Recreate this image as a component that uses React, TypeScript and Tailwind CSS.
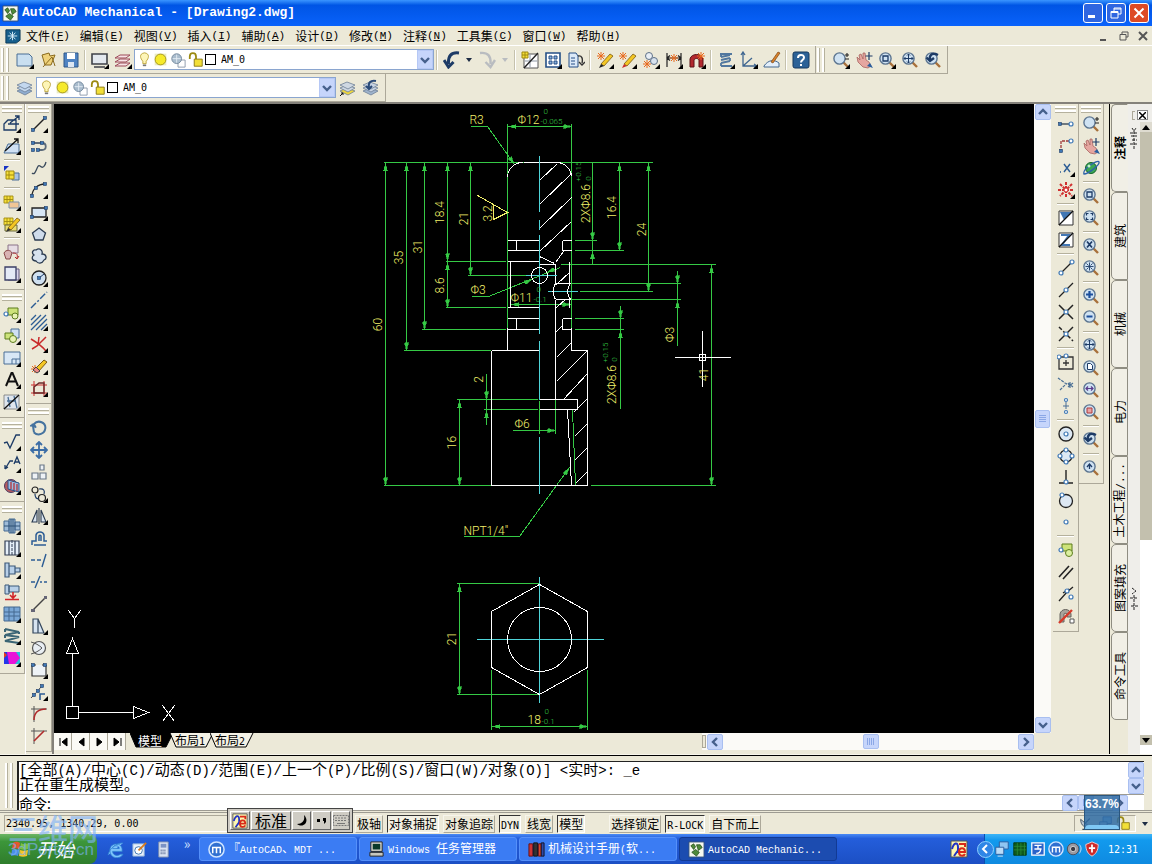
import React from 'react';

const NAVY = '#1d3b66';
const BLUE = '#3f78b5';
const GREEN = '#35c945';
const CYAN = '#4fd4d8';
const YELLOW = '#f2f06a';

/* ---------- small pieces shared by the icons ---------- */

const ring = (x: number, y: number, r = 2) => (
  <circle key={`r${x}-${y}`} cx={x} cy={y} r={r} fill="#fff" stroke={BLUE} strokeWidth="1.2" />
);
const node = (x: number, y: number) => (
  <rect key={`n${x}-${y}`} x={x - 1.5} y={y - 1.5} width="3" height="3" fill={BLUE} stroke={NAVY} strokeWidth=".6" />
);
const lens = (inner?: React.ReactNode) => (
  <>
    <path d="M11.5 11.5l4.5 4.5" stroke="#a8703a" strokeWidth="2.4" />
    <circle cx="7.5" cy="7.5" r="5.6" fill="#cfe2f2" stroke="#5c7590" strokeWidth="1.4" />
    {inner}
  </>
);
const star = (x: number, y: number) => (
  <path
    d={`M${x} ${y - 4}v8M${x - 4} ${y}h8M${x - 3} ${y - 3}l6 6M${x + 3} ${y - 3}l-6 6`}
    stroke="#e8691c"
    strokeWidth="1"
  />
);
const pencil = (tip: string) => (
  <>
    <path d="M5 13L14 3l3 2-9 10z" fill="#f3c623" stroke="#7a5a12" strokeWidth=".8" />
    <path d="M5 13l3 2-5 2z" fill={tip} stroke="none" />
  </>
);
const sheets = (a: string, b: string) => (
  <>
    <path d="M1 12l7-3 8 3-7 4z" fill={b} stroke="#6d7f95" strokeWidth=".8" />
    <path d="M1 9l7-3 8 3-7 4z" fill={a} stroke="#6d7f95" strokeWidth=".8" />
    <path d="M1 6l7-3 8 3-7 4z" fill={a} stroke="#6d7f95" strokeWidth=".8" />
  </>
);
const yellowGrid = (
  <path d="M1 3h9v7H1zM4 3v7M7 3v7M1 6.500h9" fill="#f6e03a" stroke="#a08a10" strokeWidth=".9" />
);

const ICONS: Record<string, React.ReactNode> = {
  // standard toolbar
  New: <path d="M1 3h12l3 3v9H1z" fill="#c9dff0" stroke="#4a6f95" />,
  Open: (
    <>
      <path d="M3 4l7-2 1 3 5-1-4 10H6z" fill="#efd27a" stroke="#8a6a1d" />
      <path d="M4 16l9-10 3 9" stroke="#8a6a1d" />
    </>
  ),
  Save: (
    <>
      <path d="M2 2h14v14H2z" fill="#4f83c2" stroke="#2f5688" />
      <path d="M5 2h8v6H5z" fill="#fff" stroke="none" />
      <path d="M6 11h6v5H6z" fill="#dce6f2" stroke="none" />
    </>
  ),
  Screen: <path d="M1 3h15v10H1zM3 16h11" fill="#e3e8ee" stroke="#3f4248" strokeWidth="1.6" />,
  'Layer sheets': (
    <path d="M1 7l5-3h10l-4 3zM1 11l5-3h10l-4 3zM1 15l5-3h10l-4 3z" fill="#f7e3e6" stroke="#9c4a58" />
  ),
  Undo: <path d="M16 2C8 1 5 5 5.500 13M1 9l4.500 7 5-5" stroke={NAVY} strokeWidth="3" />,
  Redo: <path d="M2 2c8-1 11 3 10.500 11M17 9l-4.500 7-5-5" stroke="#b9bcc0" strokeWidth="2.4" />,
  'Power dimension': (
    <>
      <path d="M3 3h14v14H3z" fill="#fff" stroke="#555" />
      <path d="M9 4v12M4 10h12" stroke="#8d97a3" />
      <path d="M3 17L17 2" stroke="#222" strokeWidth="1.4" />
      <path d="M1 1h6v6H1zM4 1v6M1 4h6" fill="#f6e03a" stroke="#a08a10" />
    </>
  ),
  'Hole chart': (
    <>
      <path d="M2 2h14v14H2z" fill="#fff" stroke="#244f86" strokeWidth="1.6" />
      <path d="M5 5h3v3H5zM10 5h3v3h-3zM5 10h3v3H5zM10 10h3v3h-3z" fill="#8ab0dc" stroke="#244f86" />
    </>
  ),
  'Copy sheet': (
    <>
      <path d="M2 2h7l2 3v11H2z" fill="#dbe9f8" stroke="#244f86" />
      <path d="M4 7h4M4 10h4M4 13h4" stroke="#244f86" />
      <path d="M11 5c4-1 5 3 4 7M12 11l3 3 3-3" stroke="#333" strokeWidth="1.4" />
    </>
  ),
  'Edit new': <>{pencil('#222')}{star(5, 5)}</>,
  'Edit pick': <>{pencil('#c9302c')}{star(4, 5)}</>,
  'Gear links': (
    <>
      <circle cx="7" cy="5" r="3.500" fill="#e8eef5" stroke="#5f7187" />
      <circle cx="12" cy="10" r="3.500" fill="#d7e2ee" stroke="#5f7187" />
      {star(5, 13)}
    </>
  ),
  'Auto dimension': (
    <>
      <path d="M2 2v14M16 2v14M2 7h14M5 4.500L2 7l3 2.500M13 4.500L16 7l-3 2.500" stroke="#222" strokeWidth="1.2" />
      {star(9, 7)}
    </>
  ),
  'Content library': (
    <>
      <path d="M2 8c1-6 12-6 13 0v8h-4V9c-1-2-4-2-5 0v7H2z" fill="#b2282e" stroke="#5a1216" />
      {star(13, 5)}
    </>
  ),
  Spring: <path d="M3 3h12M4 6l9-2M4 9l9-2M4 12l9-2M4 15h11M4 3v3M13 7v3M4 12v3" stroke="#52789f" strokeWidth="1.8" />,
  Axes: <path d="M3 2v13h13M3 15L12 7M1 4l2-3 2 3M14 13l3 2-3 2" stroke="#3f6690" strokeWidth="1.3" />,
  Sketch: (
    <>
      <path d="M1 15c4-6 10-7 15-3v4H1z" fill="#e2eefa" stroke="#44688f" />
      <path d="M8 11l7-10 2 1-7 10z" fill="#d9822b" stroke="#7d4512" strokeWidth=".7" />
    </>
  ),
  Help: (
    <>
      <rect x="1" y="1" width="16" height="16" rx="2" fill="#2c6297" stroke="#15385f" />
      <path d="M6 7c0-4 6-4 6-.5C12 9 9 9 9 11.500M9 13v2" stroke="#fff" strokeWidth="2" />
    </>
  ),
  // zoom tools
  'Zoom realtime': lens(<path d="M13 4h4M15 2v4M13 8h4" stroke="#222" strokeWidth="1.1" />),
  Pan: (
    <>
      <path d="M2 6l3 3-1-5 2-1 2 5 0-6 2 0 1 7 3 2 2 4-3 2-5-1-5-5z" fill="#e5a6a0" stroke="#a8645f" strokeWidth=".8" />
      <path d="M12 15l3-3 3 5z" fill="#2b5f9e" stroke="none" />
      <path d="M14 1v8M10.500 5h7" stroke={NAVY} strokeWidth="1.2" />
    </>
  ),
  Orbit: (
    <>
      <circle cx="9" cy="9" r="5.500" fill="#3aa655" stroke="#14652d" />
      <path d="M2 15C0 10 16 0 17 3s-11 12-15 12z" stroke="#2d62a8" strokeWidth="1.3" />
      <circle cx="7" cy="7" r="1.500" fill="#c4f0cf" stroke="none" />
    </>
  ),
  'Zoom window': lens(<path d="M5 5h5v5H5z" stroke={NAVY} strokeWidth="1.300" />),
  'Zoom frame': lens(<path d="M4.500 6.500v-2h2M8.500 4.500h2v2M10.500 8.500v2h-2M6.500 10.500h-2v-2" stroke={NAVY} strokeWidth="1.200" />),
  'Zoom scale': lens(<path d="M5 4.500l5 6M10 4.500l-5 6" stroke={NAVY} strokeWidth="1.700" />),
  'Zoom centre': lens(<path d="M4.500 4.500l2 2M10.500 4.500l-2 2M4.500 10.500l2-2M10.500 10.500l-2-2M7.500 3.500v8M3.500 7.500h8" stroke={NAVY} strokeWidth=".9" />),
  'Zoom in': lens(<path d="M7.500 4v7M4 7.500h7" stroke="#1c4f9c" strokeWidth="2.200" />),
  'Zoom out': lens(<path d="M4.500 7.500h6" stroke="#1c4f9c" strokeWidth="2" />),
  'Zoom all': lens(<path d="M7.500 3v9M3 7.500h9M6 4.500l1.500-1.500L9 4.500M6 10.500L7.500 12 9 10.500M4.500 6L3 7.500 4.500 9M10.500 6L12 7.500 10.500 9" stroke={NAVY} strokeWidth="1" />),
  'Zoom extents': lens(<path d="M5.500 4.500h3l2 2v4h-5z" fill="#fff" stroke={NAVY} />),
  'Zoom object': lens(<path d="M4 7.500h7M6 5.500l-2 2 2 2M9 5.500l2 2-2 2" stroke="#5b3b8c" strokeWidth="1.200" />),
  'Zoom part': lens(<path d="M5 5h5v5H5z" fill="#e8a3a3" stroke="#b03a3a" />),
  'Zoom previous': lens(<path d="M14 4C8 1 5 4 6 9M2.500 6.500L6 10l4-3" stroke={NAVY} strokeWidth="2.400" />),
  'Zoom restore': lens(<path d="M5 8l2.500-3L10 8M7.500 5v5" stroke={NAVY} strokeWidth="1.300" />),
  // layer tools
  Layers: sheets('#c3d8ef', '#8fadd0'),
  'Layer current': <>{sheets('#cfd8e2', '#f0d83a')}<path d="M1 17l3-3M2 14h2v2" stroke="#111" /></>,
  'Layer previous': <>{sheets('#c7d3e2', '#9fb4cd')}<path d="M14 2C8 1 6 4 7 9M4 7l3 3 3-3" stroke="#2a4a78" strokeWidth="2" /></>,
  // layout column
  'Rectangle by base': <path d="M1 9l4-4h8v10H1zM5 9h11M7 8l9-7M12 1h4v4" stroke={NAVY} strokeWidth="1.300" />,
  'Rectangle by height': (
    <>
      <path d="M1 16l4-9h11v9z" fill="#cfe0f3" stroke="#4a6f95" />
      <path d="M2 14L15 2M11 2h4v4" stroke="#111" strokeWidth="1.300" />
    </>
  ),
  'Block grid': (
    <>
      <path d="M1 1h5l-5 5z" fill="#1733c4" stroke="none" />
      <path d="M9 8h7v7H9z" fill="#a9c3e4" stroke="#4a6f95" />
      <path d="M3 6h8v8H3zM6 6v8M3 10h8" fill="#f6e03a" stroke="#a08a10" />
    </>
  ),
  'Block copy': <>{yellowGrid}<path d="M6 9h10v6H6z" fill="#f1c696" stroke="#7d91a8" /></>,
  'Block edit': <>{yellowGrid}<path d="M2 10h12v6H2z" fill="#e9dd70" stroke="#6b6b40" />{pencil('#333')}</>,
  'Part shapes': (
    <>
      <path d="M5 2h10v8H5z" fill="#e6dde4" stroke="#8a7288" />
      <path d="M1 10c2-4 7-3 8 0l-2 6H3z" fill="#d9b3b3" stroke="#894848" />
      <path d="M10 10c4 0 5 2 4 5M12 14l2 2 2-3" stroke="#b2282e" />
    </>
  ),
  'Copy frame': (
    <>
      <path d="M5 4h11v11H5z" fill="#d8d4ea" stroke="#60597d" />
      <path d="M2 2h11v13H2z" fill="#e4eaf6" stroke="#3b3f66" strokeWidth="1.300" />
    </>
  ),
  'Part reference': (
    <>
      <path d="M5 3h10v7H5z" fill="#cde37a" stroke="#5c7d1d" />
      <circle cx="12" cy="11" r="3" fill="#e8f3b5" stroke="#5c7d1d" />
      {ring(3, 9)}
    </>
  ),
  'Part group': (
    <>
      <path d="M8 2h8v9H8z" fill="#cfe0f3" stroke="#4a6f95" />
      <path d="M2 6h8v6H2z" fill="#cde37a" stroke="#5c7d1d" />
      <circle cx="10" cy="12" r="3.500" fill="#e8f3b5" stroke="#5c7d1d" />
    </>
  ),
  'Title block': <path d="M1 3h16v12H1zM9 15v-5h8M13 10v5" fill="#d8e7f5" stroke="#4a6f95" />,
  Text: <path d="M3 15L8.500 2h1L15 15M5 10.500h8" stroke="#111" strokeWidth="2" />,
  'Section line': (
    <>
      <path d="M1 2h15v14H1z" fill="#dfe6ee" stroke="#777" strokeWidth=".8" />
      <path d="M5 4l2 10M11 3l3 12M4 8h9" stroke="#4a6f95" strokeWidth="1.300" />
      <path d="M1 16L16 2" stroke="#111" strokeWidth="1.300" />
    </>
  ),
  'Surface texture': <path d="M1 10l3-1 3 6L13 2h4" stroke={NAVY} strokeWidth="1.400" />,
  Leader: <path d="M2 14L7 6h3M2 14l0-4M2 14l3-2M11 9l3-7 3 7M12 7h4" stroke={NAVY} strokeWidth="1.300" />,
  'Bill of material': (
    <>
      <circle cx="8" cy="9" r="6.500" fill="#b65a5f" stroke="#4a3b60" />
      <path d="M5 3l11 3v9L5 12z" fill="#9dbbe0" stroke="#2c4f85" />
      <path d="M8 5v7M11 6v7M14 7v7" stroke="#b2282e" strokeWidth="1.200" />
    </>
  ),
  Screw: (
    <>
      <path d="M1 4h5v10H1zM6 2h6v14H6zM12 5h5v8h-5z" fill="#9fbcd9" stroke="#456990" />
      <path d="M1 9h16M8 2v14M10 2v14" stroke="#2f5377" />
    </>
  ),
  'Shaft section': (
    <>
      <path d="M2 2h14v14H2zM6 2v14M12 2v14" fill="#e6f0fa" stroke="#333f55" strokeWidth="1.200" />
      <path d="M9 1v16" stroke="#333f55" strokeDasharray="3 1" />
    </>
  ),
  'Shaft generator': <path d="M2 2h4v14H2zM6 5h6v8H6zM12 7h5v4h-5z" fill="#b8d0e8" stroke="#3b5878" strokeWidth="1.200" />,
  'Bearing load': (
    <>
      <path d="M2 2h4v9H2zM6 3h10v6H6z" fill="#b8d0e8" stroke="#3b5878" />
      <path d="M10 9v5M7 12l3 3 3-3M2 16.500h14" stroke="#d0262b" strokeWidth="1.600" />
    </>
  ),
  'Fem table': <path d="M1 2h16v14H1zM1 7h16M1 11h16M6 2v14M11 2v14" fill="#7aa7d6" stroke="#456990" />,
  'Spring coil': <path d="M2 2l14 3-14 3 14 2-14 4 14 2M2 2v3M16 5v2M2 8v3" stroke="#3b6575" strokeWidth="2" />,
  'Colour map': (
    <>
      <path d="M1 3h16v12H1z" fill="#25c4d8" stroke="none" />
      <path d="M1 3h6v12H1z" fill="#2436e8" stroke="none" />
      <path d="M4 3h9l4 6-5 6H6z" fill="#e815d8" stroke="none" />
      <path d="M1 3l3 3-3 3z" fill="#e83a1c" stroke="none" />
    </>
  ),
  // draw column
  Line: <><path d="M3 15L15 3" stroke="#222" strokeWidth="1.400" />{node(3, 15)}{node(15, 3)}</>,
  Polyline: <><path d="M3 6h9c5 0 5 7 0 7H8" stroke="#5d6b7a" strokeWidth="1.800" />{node(3, 6)}{node(12, 6)}{node(3, 13)}{node(8, 13)}</>,
  Spline: <path d="M2 14c4 4 5-10 8-7s5 0 6-4" stroke="#3a4a5c" strokeWidth="1.300" />,
  Arc: <><path d="M2 15C2 8 8 3 15 3" stroke="#222" strokeWidth="1.300" />{node(2, 15)}{node(6, 7)}{node(15, 3)}</>,
  Rectangle: <><path d="M2 5h14v9H2z" fill="#d7e6f4" stroke="#222" strokeWidth="1.300" />{node(2, 14)}{node(16, 5)}</>,
  Polygon: <path d="M9 3l6.500 5-2.500 7H5L2.500 8z" fill="#cfdceb" stroke="#2b3b50" strokeWidth="1.300" />,
  'Revision cloud': <path d="M6 3c4-3 7 1 6 4 5 0 5 5 2 6-2 4-6 4-8 1-4 0-5-4-2-6-3-2-1-6 2-5z" fill="#d7e3ef" stroke="#2b3b50" strokeWidth="1.300" />,
  Circle: <><circle cx="9" cy="9" r="7" fill="#cfe0f0" stroke="#222" strokeWidth="1.300" /><path d="M9 9l5-4" stroke={NAVY} />{node(9, 9)}</>,
  'Construction line': <path d="M1 17L17 1" stroke="#2c5c94" strokeWidth="1.400" strokeDasharray="7 2 2 2" />,
  Hatch: <path d="M1 7l5-5M1 12L11 2M1 17L16 2M6 17L17 6M11 17l6-6" stroke="#2c5c94" strokeWidth="1.300" />,
  'Centre cross': <path d="M1 4c5 3 11 7 15 12M2 14l5-3 9-9M8 10L9 2" stroke="#c92a2a" strokeWidth="1.500" />,
  'Erase part': <>{star(5, 12)}<path d="M5 12L14 3l3 2-9 10z" fill="#f3c623" stroke="#7a5a12" /><path d="M3 13l3-3 4 4-3 2z" fill="#e88" stroke="#444" /></>,
  Contour: <><path d="M4 2v15M14 2v15M1 6h16M1 14h16" stroke="#c92a2a" /><path d="M4 8l5-4h5v10H4z" stroke="#6b2a2a" strokeWidth="1.400" /></>,
  // modify column
  Rotate: <path d="M5 4c6-4 12 2 10 7s-9 6-12 1M3 12l1-9M1 5l4-1 1 4" stroke="#45739f" strokeWidth="2" transform="rotate(-15 9 9)" />,
  Move: <path d="M9 1v16M1 9h16M6 4l3-3 3 3M6 14l3 3 3-3M4 6L1 9l3 3M14 6l3 3-3 3" stroke="#3b6da6" strokeWidth="1.800" />,
  Array: <path d="M2 10h6v6H2zM10 10h6v6h-6zM10 2h4v5h-4z" fill="#eef2f6" stroke="#6b7887" strokeWidth="1.200" />,
  'Copy rotate': <><circle cx="5" cy="5" r="3" stroke="#222" strokeWidth="1.200" /><circle cx="12" cy="13" r="3.500" stroke="#222" strokeWidth="1.200" /><path d="M9 4c5-1 6 2 5 5M5 9c0 4 2 5 4 5" stroke={NAVY} strokeWidth="1.200" /></>,
  Mirror: <path d="M7 3v12H2zM11 3v12h5zM9 1v16" fill="#d9e4ef" stroke="#2b3b50" strokeWidth="1.100" />,
  Offset: <path d="M2 16v-4h4V6c1-4 7-4 8 0v6h3M4 16h12M9 12V7c0-1 2-1 2 0v5" stroke="#2c5c94" strokeWidth="1.500" />,
  Trim: <path d="M1 9h4M7 9h4M12 16L16 3" stroke="#2c5c94" strokeWidth="1.400" />,
  Extend: <path d="M1 9h4M5 15L10 3M10 9h2M14 9h3" stroke="#2c5c94" strokeWidth="1.400" />,
  Lengthen: <><path d="M2 16L16 2" stroke="#444" strokeWidth="1.400" /><path d="M1 14h4v3H1zM14 1h3v3h-3z" fill="#667" stroke="none" /></>,
  Stretch: <path d="M3 2h5v14H3zM8 2l6 14H8" fill="#d6e3f0" stroke="#33465c" strokeWidth="1.200" />,
  'Join circle': <><circle cx="9" cy="9" r="6.500" fill="#e9eef3" stroke="#555" strokeWidth="1.200" /><path d="M1 3c4 1 8 3 11 6-3 3-7 5-11 6" stroke="#555" /></>,
  Break: <><path d="M2 4h4M12 4h4M2 4v11h14V4" fill="#eef2f6" stroke="#333" strokeWidth="1.200" />{node(3, 4)}{node(15, 4)}</>,
  'Corner copy': <><path d="M1 15L12 3" stroke="#444" strokeDasharray="3 1" />{node(4, 12)}{node(8, 8)}{node(12, 3)}<path d="M10 17v-6h5" stroke="#2c5c94" strokeWidth="1.600" /></>,
  Fillet: <><path d="M1 4h16M4 1v16" stroke="#555" /><path d="M4 15c0-7 4-11 12-11" stroke="#b02b2b" strokeWidth="1.600" /></>,
  Chamfer: <><path d="M1 4h16M4 1v16" stroke="#555" /><path d="M4 14L14 4" stroke="#b02b2b" strokeWidth="1.600" /></>,
  // object snap column
  'Temporary track': <><path d="M3 9h10" stroke="#2b3b50" strokeWidth="1.300" />{node(3, 9)}{ring(14, 9)}</>,
  'Snap from': <><path d="M4 15V4h9" stroke="#a03a3a" strokeDasharray="3 1" strokeWidth="1.300" />{node(4, 14)}{ring(14, 4)}</>,
  'Point filter': <path d="M7 5l6 8M13 5l-6 8M3 13h1" stroke="#2c5c94" strokeWidth="1.400" />,
  'Snap burst': <><path d="M9 1v16M1 9h16M3 3l12 12M15 3L3 15" stroke="#d03030" strokeWidth="2" strokeDasharray="3 1" /><circle cx="9" cy="9" r="2" fill="#fff" stroke="#d03030" /></>,
  'Snap filter': <><path d="M2 2h14v14H2z" fill="#fff" stroke="#333" /><path d="M3 3h12l-8 8z" fill="#4277b4" stroke="none" /><path d="M2 16L16 2" stroke="#111" strokeWidth="1.300" /></>,
  'Snap order': <><path d="M2 2h14v14H2z" fill="#fff" stroke="#333" /><path d="M4 4h8L5 14h8" stroke="#4277b4" strokeWidth="2" /><path d="M2 16L16 2" stroke="#111" strokeWidth="1.300" /></>,
  'Snap endpoint': <><path d="M4 14L14 4" stroke="#222" strokeWidth="1.300" />{ring(4, 14)}{ring(15, 3)}</>,
  'Snap midpoint': <><path d="M2 16L16 2" stroke="#222" strokeWidth="1.300" />{ring(9, 9)}</>,
  'Snap intersection': <><path d="M2 2l14 14M16 2L2 16" stroke="#222" strokeWidth="1.500" />{ring(9, 9)}</>,
  'Snap apparent': <><path d="M2 2l14 14" stroke="#222" strokeWidth="1.500" strokeDasharray="4 2" /><path d="M16 2L2 16" stroke="#222" strokeWidth="1.500" />{ring(9, 9)}</>,
  'Snap extension': <><path d="M2 4h14v12H2zM9 7v6M6 10h6" stroke="#333" strokeWidth="1.300" />{ring(2, 4)}{ring(9, 3)}</>,
  'Snap virtual': <path d="M1 3l7 5 7 3M3 15l6-6M13 7v6M11 8l5 4M16 8l-5 4" stroke="#4a6f95" strokeWidth="1.200" strokeDasharray="3 1" />,
  'Snap symmetric': <><path d="M9 5v7M6 9h6" stroke="#4a6f95" />{ring(9, 3, 1.5)}{ring(9, 15, 1.5)}</>,
  'Snap centre': <><circle cx="9" cy="9" r="7" fill="#dde8f3" stroke="#222" strokeWidth="1.400" />{ring(9, 9)}</>,
  'Snap quadrant': <><circle cx="9" cy="9" r="6" fill="#dde8f3" stroke="#222" strokeWidth="1.200" />{ring(9, 3)}{ring(9, 15)}{ring(3, 9)}{ring(15, 9)}</>,
  'Snap perpendicular': <><path d="M9 1v12M2 14h14" stroke="#222" strokeWidth="1.400" />{ring(9, 13)}</>,
  'Snap tangent': <><circle cx="9" cy="10" r="6.500" fill="#dde8f3" stroke="#222" strokeWidth="1.300" />{ring(5, 4)}</>,
  'Snap node': ring(9, 9),
  'Snap insert': <><path d="M5 3h10v7H5z" fill="#cde37a" stroke="#5c7d1d" /><circle cx="12" cy="12" r="3.500" fill="#dcefa0" stroke="#5c7d1d" />{ring(4, 9)}</>,
  'Snap parallel': <path d="M2 14L12 3M6 16L16 5" stroke="#222" strokeWidth="1.600" />,
  'Snap nearest': <><path d="M2 16L10 7l6-5M6 8l6-4" stroke="#222" strokeWidth="1.300" />{ring(10, 6)}{ring(14, 12)}</>,
  'Snap none': <><path d="M3 15V7c1-6 10-6 11 0v3h-4V7c-1-1-3-1-3 0v8z" fill="#a9a49c" stroke="#66625c" /><path d="M2 16L15 3" stroke="#d83a2a" strokeWidth="2.400" /><path d="M13 12h4v4h-4z" fill="#fff" stroke="#555" /></>,
  // windows
  Drawing: <><path d="M1 1h16v16H1z" fill="#f7f9ef" stroke="#2d4c7a" /><path d="M3 5l3-2 2 3-2 3zM9 4h4l2 3-4 3zM4 12l4-3 4 3-3 4z" fill="#4f8a3a" stroke="#234d1b" strokeWidth=".8" /></>,
  Document: <><path d="M2 3h15v11l-4 3H2z" fill="#175f8c" stroke="#0d3a57" /><path d="M9 5v9M4 9.500h10M6 6l6 7M12 6l-6 7" stroke="#d7edf8" /></>,
  'Internet browser': <path d="M16 11H6c0 5 7 5 8 3h3c-3 6-14 5-14-4S16 1 16 9z M6 8h7c0-4-7-4-7 0zM1 15C3 7 10 2 17 2" fill="#7fc4fb" stroke="#2b7fd1" strokeWidth=".8" />,
  Desktop: <><path d="M2 3h12v13H2z" fill="#e9f1fa" stroke="#8fb0d8" /><circle cx="8" cy="10" r="4" fill="#fff" stroke="#3a72b0" /><path d="M8 10l8-8" stroke="#d97a1a" strokeWidth="2" /></>,
  Calculator: <><path d="M4 1h10v16H4z" fill="#dbe4f2" stroke="#7d8eb0" /><path d="M6 3h6v4H6z" fill="#7b93c4" stroke="none" /><path d="M6 10h6M6 13h6" stroke="#5a6c94" strokeDasharray="1 1" strokeWidth="2" /></>,
  'M badge': <><circle cx="9" cy="9" r="8" fill="#2f6fd0" stroke="#cfe4ff" strokeWidth="1.600" /><path d="M5 13V7h8v6M9 7v6" stroke="#fff" strokeWidth="1.600" /></>,
  Computer: <><path d="M3 1h12v10H3z" fill="#d8d8d0" stroke="#222" /><path d="M5 3h8v6H5z" fill="#0b3a2a" stroke="none" /><path d="M2 12h14v4H2z" fill="#c7c7bf" stroke="#222" /></>,
  Books: <><path d="M1 3h4v13H1z" fill="#c33" stroke="#611" /><path d="M6 2h4v14H6z" fill="#333" stroke="#111" /><path d="M11 3h3v13h-3z" fill="#d9482a" stroke="#611" /><path d="M14 2h3v14h-3z" fill="#2f4aa8" stroke="#112" /></>,
  Language: <><path d="M1 1h16v16H1z" fill="#fdf6b0" stroke="#555" /><path d="M2 9c2-7 6-7 6-2v6M4 16l5-7" stroke="#2233c4" strokeWidth="2" /><path d="M9 12h6c0-5-6-5-6 0s5 4 6 2M9 4h6v3" stroke="#d92a1a" strokeWidth="2" /></>,
  Network: <><path d="M6 1h10v8H6z" fill="#8fc6f2" stroke="#2a5a9c" /><path d="M2 7h9v8H2z" fill="#b9dcf7" stroke="#2a5a9c" /><path d="M4 17h6" stroke="#dfe9f5" /></>,
  Monitor: <><path d="M2 2h14v14H2z" fill="#0f5a1c" stroke="#053a0d" /><path d="M2 6h14M2 10h14M6 2v14M10 2v14M14 2v14" stroke="#2d8f3b" strokeWidth=".8" /></>,
  Input: <><path d="M2 2h14v14H2z" fill="#2a62c9" stroke="#fff" strokeWidth="1.400" /><path d="M5 5h8M9 5v4M5 9h8M12 9c0 4-3 5-5 5" stroke="#fff" strokeWidth="1.500" /></>,
  Sound: <><circle cx="8" cy="9" r="6.500" fill="#9a9aa2" stroke="#4b4b55" /><circle cx="8" cy="9" r="3" fill="#3a3a44" stroke="#ddd" /><path d="M15 4c3 3 2 7 0 10" stroke="#dfe9f5" /></>,
  Satellite: <><path d="M2 4c0 8 5 10 11 9z" fill="#b9c4d0" stroke="#3c4856" /><path d="M7 9l6-6M4 16h8M8 12v4" stroke="#3c4856" strokeWidth="1.400" /></>,
  Shield: <><path d="M9 1l7 3c0 7-3 11-7 13C5 15 2 11 2 4z" fill="#cf2b2b" stroke="#f4d4d4" /><path d="M9 4v9M5.500 8h7" stroke="#fff" strokeWidth="2" /></>,
  Bulb: <><path d="M9 1c-7 1-5 7-2 10v3h4v-3c3-3 5-9-2-10z" fill="#fdf5b8" stroke="#b59a2a" /><path d="M7 16h4" stroke="#777" strokeWidth="2" /></>,
  Sun: <><path d="M2 2h14v14H2z" fill="#e9eac0" stroke="none" /><circle cx="9" cy="9" r="6.500" fill="#f6ea2c" stroke="#9a8a12" /></>,
  Freeze: <><path d="M9 9h8v8H9z" fill="#fff" stroke="#8794a6" /><circle cx="7.500" cy="7.500" r="5.500" fill="#a9bccd" stroke="#71869c" /><path d="M7.500 3v9M3 7.500h9" stroke="#e5edf5" /></>,
  Unlock: <><path d="M2 8V5c0-5 7-5 7 0v3" stroke="#9c8a12" strokeWidth="2" /><path d="M7 8h9v8H7z" fill="#f2df38" stroke="#857410" /></>,
};

const Icon = ({ name, size = 18, fly }: { name: string; size?: number; fly?: boolean }) => (
  <svg width={size} height={size} viewBox="0 0 18 18" fill="none" stroke={NAVY} className="shrink-0" aria-hidden="true">
    {ICONS[name]}
    {fly && <path d="M18 13v5h-5z" fill="#000" stroke="none" />}
  </svg>
);

/* ---------- text: han glyphs at the element's size, latin in a narrower mono ---------- */

const Mixed = ({ text, latin = "font-['DejaVu_Sans_Mono'] text-[10px]" }: { text: string; latin?: string }) => (
  <>
    {text.split(/([\x20-\x7e]+)/).map((part, i) =>
      i % 2 ? <span key={i} className={latin}>{part}</span> : part,
    )}
  </>
);

/* ---------- toolbars; "|" is a separator, a trailing * marks a fly-out button ---------- */

const ToolButton = ({ id, vertical }: { id: string; vertical?: boolean }) => {
  const name = id.replace('*', '');
  return (
    <button
      type="button"
      aria-label={name}
      className={`flex shrink-0 items-center justify-center ${vertical ? 'h-[22px] w-full' : 'h-6 w-[23px]'}`}
    >
      <Icon name={name} fly={id.endsWith('*')} />
    </button>
  );
};

const HTools = ({ items }: { items: string[] }) => (
  <>
    {items.map((id, i) =>
      id === '|' ? (
        <div key={i} className="mx-[2px] h-5 w-[2px] shrink-0 border-l border-[#c5c1ad] bg-white" />
      ) : (
        <ToolButton key={i} id={id} />
      ),
    )}
  </>
);

const HGrip = () => (
  <div className="mr-[3px] flex h-6 w-[10px] shrink-0 justify-center gap-[2px]">
    <div className="w-[3px] border-r border-[#b5b19d] bg-white" />
    <div className="w-[3px] border-r border-[#b5b19d] bg-white" />
  </div>
);

const VGroup = ({ items, first }: { items: string[]; first?: boolean }) => (
  <div className="border-r border-b border-[#aca899] pb-1">
    <div className={`flex flex-col gap-[1px] px-[2px] ${first ? 'h-[9px] pt-[2px]' : 'h-[13px] pt-1'}`}>
      <div className="h-[3px] border-b border-[#b5b19d] bg-white" />
      <div className="h-[3px] border-b border-[#b5b19d] bg-white" />
    </div>
    {items.map((id, i) =>
      id === '|' ? (
        <div key={i} className="mx-1 my-[2px] h-[2px] border-t border-[#b5b19d] bg-white" />
      ) : (
        <ToolButton key={i} id={id} vertical />
      ),
    )}
  </div>
);

const Chevron = ({ dir }: { dir: 'up' | 'down' | 'left' | 'right' }) => {
  const d = {
    up: 'M3 9l4-4 4 4',
    down: 'M3 5l4 4 4-4',
    left: 'M9 3L5 7l4 4',
    right: 'M5 3l4 4-4 4',
  }[dir];
  return (
    <svg width="14" height="14" viewBox="0 0 14 14" fill="none" stroke="#45608c" strokeWidth="2.4" aria-hidden="true">
      <path d={d} />
    </svg>
  );
};

const ScrollButton = ({ dir }: { dir: 'up' | 'down' | 'left' | 'right' }) => (
  <button
    type="button"
    aria-label={`Scroll ${dir}`}
    className="flex size-4 shrink-0 items-center justify-center rounded-[2px] border border-[#a9bff0] bg-[#c6d5fb]"
  >
    <Chevron dir={dir} />
  </button>
);

const LayerSelect = ({ label }: { label: string }) => (
  <label className="flex h-[21px] w-[300px] shrink-0 items-center border border-[#8aa5cf] bg-white pl-[2px]">
    <Icon name="Bulb" size={15} />
    <span className="w-[1px]" />
    <Icon name="Sun" size={15} />
    <span className="w-[2px]" />
    <Icon name="Freeze" size={16} />
    <span className="w-[2px]" />
    <Icon name="Unlock" size={16} />
    <span className="mx-[1px] size-[11px] shrink-0 border border-black bg-white" />
    <select
      aria-label={label}
      className="min-w-0 flex-1 appearance-none bg-transparent pl-1 font-['DejaVu_Sans_Mono'] text-[10px] leading-4 text-black outline-none"
    >
      <option>AM_0</option>
    </select>
    <span className="flex h-[19px] w-4 items-center justify-center border border-[#b6c8f5] bg-[#c6d5fb]">
      <Chevron dir="down" />
    </span>
  </label>
);

const DropArrow = ({ faded }: { faded?: boolean }) => (
  <svg width="6" height="4" viewBox="0 0 6 4" className="shrink-0" aria-hidden="true">
    <path d="M0 0h6L3 4z" fill={faded ? '#b9bcc0' : '#1d2c44'} />
  </svg>
);

/* ---------- the CAD model ---------- */

type Seg = [number, number, number, number];

const Lines = ({ segs, color }: { segs: Seg[]; color: string }) => (
  <path d={segs.map(([a, b, c, d]) => `M${a} ${b}L${c} ${d}`).join('')} stroke={color} fill="none" />
);

const WHITE: Seg[] = [
  [523, 162, 557, 162],
  [507, 240, 539, 240], [507, 250, 539, 250], [516, 240, 516, 250],
  [562, 240, 571, 240], [562, 250, 571, 250], [562, 240, 562, 250],
  [507, 261, 539, 261], [510, 261, 510, 307], [507, 307, 539, 307], [569, 261, 569, 283], [569, 299, 569, 307],
  [539, 256, 554, 263], [539, 264, 555, 264], [555, 264, 555, 283], [555, 299, 555, 399],
  [555, 283, 570, 283], [555, 299, 570, 299],
  [507, 318, 539, 318], [507, 329, 539, 329], [516, 318, 516, 329],
  [562, 318, 571, 318], [562, 329, 571, 329], [562, 318, 562, 329],
  [507, 327, 507, 350], [571, 327, 571, 350],
  [491, 350, 539, 350], [571, 350, 587, 350], [491, 350, 491, 485], [587, 350, 587, 485], [491, 485, 587, 485],
  [539, 399, 577, 399], [539, 409, 577, 409], [577, 399, 577, 409], [567, 409, 571, 485],
];

const HATCH: Seg[] = [
  [557, 163, 539, 180], [571, 173, 539, 204], [571, 197, 539, 228], [571, 221, 539, 251],
  [563, 251, 555, 262], [570, 271, 556, 284], [565, 299, 556, 307], [562, 325, 555, 332],
  [571, 342, 556, 357], [587, 350, 556, 381], [587, 373, 563, 399], [587, 398, 573, 412],
  [587, 423, 574, 436], [587, 447, 574, 460], [587, 471, 575, 483],
];

const EXTENSIONS: Seg[] = [
  [507, 123, 507, 327], [571, 123, 571, 327], [383, 162, 523, 162], [557, 162, 652, 162],
  [445, 261, 505, 261], [467, 275, 525, 275], [445, 307, 505, 307], [421, 329, 505, 329],
  [403, 350, 490, 350], [383, 485, 490, 485], [590, 485, 715, 485],
  [574, 240, 596, 240], [574, 250, 623, 250], [560, 264, 715, 264],
  [571, 283, 680, 283], [579, 291, 652, 291], [571, 299, 680, 299],
  [574, 318, 623, 318], [574, 329, 623, 329],
  [456, 399, 537, 399], [483, 409, 537, 409], [539, 400, 539, 433], [555, 399, 555, 433],
  [572, 409, 575, 485], [512, 430, 555, 430],
  [470, 126, 487, 126], [487, 126, 514, 164],
  [471, 296, 488, 296], [488, 296, 560, 267],
  [463, 536, 519, 536], [519, 536, 569, 467],
  [456, 583, 539, 583], [456, 694, 537, 694], [491, 669, 491, 729], [587, 669, 587, 729],
  [592, 162, 592, 264], [620, 305, 620, 408], [677, 270, 677, 345], [486, 373, 486, 424],
];

// vertical dimensions: x, top, bottom
const V_DIMS: [number, number, number][] = [
  [385, 162, 485], [406, 162, 350], [424, 162, 329], [447, 162, 261], [447, 261, 307], [470, 162, 275],
  [619, 162, 250], [648, 162, 291], [711, 264, 485], [459, 399, 485], [459, 583, 694],
];
// horizontal dimensions: y, left, right
const H_DIMS: [number, number, number][] = [[126, 507, 571], [304, 510, 570], [726, 491, 587]];

// arrow heads: tip x, tip y, rotation (0 points up)
const HEADS: [number, number, number][] = [
  ...V_DIMS.flatMap(([x, a, b]): [number, number, number][] => [[x, a, 0], [x, b, 180]]),
  ...H_DIMS.flatMap(([y, a, b]): [number, number, number][] => [[a, y, -90], [b, y, 90]]),
  [592, 240, 180], [592, 250, 0], [620, 318, 180], [620, 329, 0], [677, 283, 180], [677, 299, 0],
  [486, 399, 180], [486, 409, 0], [555, 430, 90], [514, 164, 145], [532, 279, 68], [546, 272, 248], [569, 467, 36],
];

const AXES: Seg[] = [
  [539, 155, 539, 211], [539, 219, 539, 229], [539, 234, 539, 333], [539, 340, 539, 399], [539, 436, 539, 493],
  [525, 275, 556, 275], [547, 291, 577, 291], [476, 639, 603, 639], [539, 576, 539, 702],
];

const FLAT: [string, number, number][] = [
  ['R3', 469, 123], ['Φ12', 517, 123], ['Φ3', 470, 293], ['Φ11', 510, 301], ['Φ6', 514, 427],
  ['NPT1/4"', 463, 534], ['18', 527, 723],
];
const FLAT_TOL: [string, number, number][] = [
  ['0', 543, 113], ['-0.065', 540, 123], ['0', 536, 291], ['-0.1', 533, 301], ['0', 544, 713], ['-0.1', 541, 723],
];
const TURNED: [string, number, number][] = [
  ['60', 377, 324], ['35', 398, 257], ['31', 417, 246], ['18.4', 439, 212], ['21', 463, 218], ['8.6', 439, 285],
  ['3.2', 487, 213], ['2XΦ8.6', 585, 203], ['16.4', 611, 207], ['24', 641, 229], ['Φ3', 669, 334],
  ['2XΦ8.6', 611, 384], ['41', 703, 374], ['2', 478, 379], ['16', 451, 442], ['21', 451, 638],
];
const TURNED_TOL: [string, number, number][] = [
  ['+0.15', 577, 171], ['0', 587, 178], ['+0.15', 604, 352], ['0', 613, 359],
];

const Model = () => (
  <svg className="block h-full w-full bg-black" shapeRendering="crispEdges" role="img" aria-label="Drawing2.dwg">
    <g transform="translate(-53.5 -103.5)">
      <Lines segs={EXTENSIONS} color={GREEN} />
      <Lines segs={V_DIMS.map(([x, a, b]): Seg => [x, a, x, b])} color={GREEN} />
      <Lines segs={H_DIMS.map(([y, a, b]): Seg => [a, y, b, y])} color={GREEN} />
      {HEADS.map(([x, y, r], i) => (
        <path key={i} d="M0 1L2 8H-2z" fill={GREEN} stroke={GREEN} strokeWidth=".6" transform={`translate(${x} ${y}) rotate(${r})`} />
      ))}
      <Lines segs={WHITE} color="#fff" />
      <Lines segs={HATCH} color="#fff" />
      <Lines segs={AXES} color={CYAN} />

      <g fill="none" stroke="#fff">
        <path d="M507 177A15 15 0 0 1 523 162M557 162A15 15 0 0 1 571 176" />
        <circle cx="539" cy="275" r="8" />
        <path d="M555 283Q550 291 555 299M570 283Q564 291 570 299" />
        <path d="M539 584L587 611V667L539 694L491 667V611Z" />
        <circle cx="539" cy="639" r="32" />
        {/* crosshair */}
        <path d="M674 357H730M702 330V386M699 354H705V360H699Z" />
        {/* ucs icon */}
        <path d="M66 706H78V718H66ZM72 706V653M78 712H133M66 653H78L72 638ZM133 706V718L148 712Z" />
        <path d="M68 610L74 618L80 610M74 618V627M162 705L174 721M174 705L162 721" />
      </g>
      <path d="M477 195L507 212L493 219V204" fill="none" stroke={YELLOW} />

      <g className="font-['Roboto',sans-serif] font-light">
        <g fill={YELLOW} fontSize="12">
          {FLAT.map(([t, x, y], i) => <text key={i} x={x} y={y}>{t}</text>)}
          {TURNED.map(([t, x, y], i) => (
            <text key={i} textAnchor="middle" transform={`translate(${x + 4} ${y}) rotate(-90)`}>{t}</text>
          ))}
        </g>
        <g fill={GREEN} fontSize="8">
          {FLAT_TOL.map(([t, x, y], i) => <text key={i} x={x} y={y}>{t}</text>)}
          {TURNED_TOL.map(([t, x, y], i) => (
            <text key={i} textAnchor="middle" transform={`translate(${x + 3} ${y}) rotate(-90)`}>{t}</text>
          ))}
        </g>
      </g>
    </g>
  </svg>
);

/* ---------- page data ---------- */

const MENUS = ['文件F', '编辑E', '视图V', '插入I', '辅助A', '设计D', '修改M', '注释N', '工具集C', '窗口W', '帮助H'];

const LEFT_A = [
  ['Rectangle by base*', 'Rectangle by height*', '|', 'Block grid', '|', 'Block copy*', 'Block edit*', '|', 'Part shapes', 'Copy frame*'],
  ['Part reference*', 'Part group*', 'Title block*', 'Text*', 'Section line*'],
  ['Surface texture*', 'Leader*', 'Bill of material*'],
  ['Screw*', 'Shaft section*', 'Shaft generator*', 'Bearing load', 'Fem table*', 'Spring coil*', 'Colour map*'],
];
const LEFT_B = [
  ['Line*', 'Polyline', 'Spline', 'Arc*', 'Rectangle*', 'Polygon', 'Revision cloud', 'Circle*', 'Construction line*', 'Hatch*', 'Centre cross*', 'Erase part*', 'Contour*'],
  ['Rotate', 'Move', 'Array', 'Copy rotate*', 'Mirror*', 'Offset', 'Trim', 'Extend', 'Lengthen', 'Stretch*', 'Join circle', 'Break*', 'Corner copy*', 'Fillet', 'Chamfer'],
];
const SNAPS = [
  'Temporary track', 'Snap from', 'Point filter*', 'Snap burst*', '|', 'Snap filter', 'Snap order', '|',
  'Snap endpoint', 'Snap midpoint', 'Snap intersection', 'Snap apparent', '|', 'Snap extension', 'Snap virtual', 'Snap symmetric', '|',
  'Snap centre', 'Snap quadrant', 'Snap perpendicular', 'Snap tangent', 'Snap node', '|',
  'Snap insert', 'Snap parallel', 'Snap nearest', 'Snap none',
];
const ZOOMS = [
  'Zoom realtime', 'Pan', 'Orbit', '|', 'Zoom window', 'Zoom frame', '|', 'Zoom scale', 'Zoom centre', '|',
  'Zoom in', 'Zoom out', '|', 'Zoom all', 'Zoom extents', 'Zoom object', 'Zoom part', '|', 'Zoom previous', '|', 'Zoom restore',
];
const PALETTES = ['注释', '建筑', '机械', '电力', '土木工程/...', '图案填充', '命令工具'];

const MODES: [string, boolean][] = [
  ['极轴', false], ['对象捕捉', true], ['对象追踪', false], ['DYN', true], ['线宽', false], ['模型', true],
];
const LOCKS: [string, boolean][] = [['选择锁定', false], ['R-LOCK', true], ['自下而上', false]];

const TASKS = [
  { icon: 'M badge', text: '『AutoCAD、MDT ...' },
  { icon: 'Computer', text: 'Windows 任务管理器' },
  { icon: 'Books', text: '机械设计手册(软...' },
  { icon: 'Drawing', text: 'AutoCAD Mechanic...', active: true },
];

/* ---------- page parts ---------- */

const TitleBar = () => (
  <header className="flex h-[26px] shrink-0 items-center bg-linear-to-b from-[#3a95ff] via-[#0055e5] via-20% to-[#0a62fb] pl-[2px]">
    <Icon name="Drawing" size={17} />
    <h1 className="ml-[3px] flex-1 truncate font-['Liberation_Mono',monospace] text-[13px] font-bold text-white">
      AutoCAD Mechanical - [Drawing2.dwg]
    </h1>
    <div className="flex gap-[3px] pr-[3px]">
      <button type="button" aria-label="Minimize" className="flex size-5 items-end rounded-[3px] border border-white bg-[#2f66e0] p-1">
        <span className="h-[3px] w-[7px] bg-white" />
      </button>
      <button type="button" aria-label="Restore" className="flex size-5 items-center justify-center rounded-[3px] border border-white bg-[#2f66e0]">
        <svg width="12" height="12" viewBox="0 0 12 12" fill="none" stroke="#fff" aria-hidden="true">
          <path d="M4 4V1h7v6H8M1 4.500h7v6.500H1zM1 5.500h7M4 2h7" />
        </svg>
      </button>
      <button type="button" aria-label="Close" className="flex size-5 items-center justify-center rounded-[3px] border border-white bg-[#dd4a25]">
        <svg width="12" height="12" viewBox="0 0 12 12" stroke="#fff" strokeWidth="2" aria-hidden="true">
          <path d="M1.500 1.500l9 9M10.500 1.500l-9 9" />
        </svg>
      </button>
    </div>
  </header>
);

const MenuBar = () => (
  <nav className="flex h-5 shrink-0 items-center border-b border-white pl-1 text-[12px]">
    <Icon name="Document" size={17} />
    <div className="ml-[5px] flex flex-1 gap-[10px]">
      {MENUS.map((m) => (
        <button key={m} type="button" className="flex items-center whitespace-nowrap leading-[18px]">
          {m.slice(0, -1)}
          <span className="font-['Liberation_Mono',monospace] text-[11px]">
            (<u>{m.slice(-1)}</u>)
          </span>
        </button>
      ))}
    </div>
    <div className="flex items-center gap-[9px] pr-1">
      <button type="button" aria-label="Minimize drawing" className="flex size-[10px] items-end">
        <span className="h-[2px] w-[6px] bg-[#555]" />
      </button>
      <button type="button" aria-label="Restore drawing">
        <svg width="10" height="10" viewBox="0 0 10 10" fill="none" stroke="#555" aria-hidden="true">
          <path d="M3 3V1h6v5H7M1 3.500h6v5.500H1z" />
        </svg>
      </button>
      <button type="button" aria-label="Close drawing">
        <svg width="10" height="10" viewBox="0 0 10 10" stroke="#555" strokeWidth="2" aria-hidden="true">
          <path d="M1 1l8 8M9 1L1 9" />
        </svg>
      </button>
    </div>
  </nav>
);

const Toolbars = () => (
  <>
    <div className="flex h-7 shrink-0">
      <div className="flex items-center border-r border-b border-[#aca899] pr-[3px]">
        <HGrip />
        <HTools items={['New*', 'Open', 'Save', '|', 'Screen*', 'Layer sheets*']} />
        <LayerSelect label="Mechanical layer" />
        <HTools items={['|', 'Undo']} />
        <button type="button" aria-label="Undo list" className="flex h-6 w-3 items-center justify-center"><DropArrow /></button>
        <HTools items={['Redo']} />
        <button type="button" aria-label="Redo list" className="flex h-6 w-[14px] items-center justify-center"><DropArrow faded /></button>
        <HTools
          items={[
            '|', 'Power dimension', 'Hole chart*', 'Copy sheet', '|', 'Edit new*', 'Edit pick*', 'Gear links*', 'Auto dimension*',
            'Content library*', '|', 'Spring*', 'Axes*', 'Sketch', '|', 'Help',
          ]}
        />
      </div>
      <div className="flex items-center border-r border-b border-[#aca899] pr-[3px]">
        <HGrip />
        <HTools items={['Zoom realtime*', 'Pan', 'Zoom window*', 'Zoom all', 'Zoom previous']} />
      </div>
    </div>
    <div className="flex h-7 shrink-0">
      <div className="flex items-center border-r border-b border-[#aca899] pr-[3px]">
        <HGrip />
        <HTools items={['Layers']} />
        <LayerSelect label="Layer" />
        <HTools items={['Layer current', 'Layer previous']} />
      </div>
    </div>
    <div className="h-[2px] shrink-0 bg-[#84817a]" />
  </>
);

const ThumbH = () => (
  <span className="flex h-[15px] w-4 items-center justify-center gap-[1px] rounded-[2px] border border-[#a9bff0] bg-[#c6d5fb]">
    {[0, 1, 2, 3].map((i) => <span key={i} className="h-[7px] w-[1px] bg-[#8ba7e6]" />)}
  </span>
);

const LayoutTabs = () => (
  <div className="flex h-[17px] shrink-0 items-stretch bg-[#ece9d8]">
    {['M3 2v8M10 2L5 6l5 4z', 'M9 2L4 6l5 4z', 'M4 2l5 4-5 4z', 'M3 2l5 4-5 4zM10 2v8'].map((d, i) => (
      <button
        key={d}
        type="button"
        aria-label={['First tab', 'Previous tab', 'Next tab', 'Last tab'][i]}
        className="flex w-[18px] items-center justify-center border-r border-[#aca899] bg-[#fbfaf5]"
      >
        <svg width="12" height="12" viewBox="0 0 12 12" fill="#000" stroke="#000" aria-hidden="true"><path d={d} /></svg>
      </button>
    ))}
    <div className="ml-1 flex flex-1 text-[12px] leading-[14px]">
      {['模型', '布局1', '布局2'].map((t, i) => (
        <button key={t} type="button" className={`relative h-[15px] w-10 text-center ${i ? 'text-black' : 'text-white'}`}>
          <svg width="44" height="15" viewBox="0 0 44 15" className="absolute top-0 left-0" aria-hidden="true">
            <path d={i ? 'M0 0L6 14H36L43 0' : 'M0 0L6 14H36L43 0z'} fill={i ? '#f4f2e6' : '#000'} stroke="#000" />
          </svg>
          <span className="relative whitespace-nowrap"><Mixed text={t} /></span>
        </button>
      ))}
    </div>
    <div className="flex w-[332px] items-center gap-[1px] bg-[#fbfaf7]">
      <span className="h-[13px] w-1 border border-[#aca899] bg-[#ece9d8]" />
      <ScrollButton dir="left" />
      <div className="flex flex-1 justify-center">
        <ThumbH />
      </div>
      <ScrollButton dir="right" />
    </div>
  </div>
);

const PalettePanel = () => (
  <aside className="ml-[5px] flex shrink-0 border-l border-black bg-[#ece9d8]">
    <div className="w-[18px] pl-[1px]">
      {PALETTES.map((p, i) => (
        <button
          key={p}
          type="button"
          className={`flex h-[88px] w-[17px] items-center justify-center rounded-l-[5px] border border-[#8f8d82] bg-[#f1efe6] ${
            i ? 'border-r-[#8f8d82]' : 'border-r-[#f1efe6] font-bold'
          }`}
        >
          <span className="rotate-180 text-[12px] leading-none whitespace-nowrap [text-orientation:sideways] [writing-mode:vertical-rl]">
            <Mixed text={p} latin="font-['DejaVu_Sans_Mono'] text-[11px]" />
          </span>
        </button>
      ))}
    </div>
    <div className="flex w-6 flex-col bg-[#efeeea]">
      <div className="flex h-[18px] items-end justify-center gap-[2px] pb-[2px]">
        <span className="h-[9px] w-[3px] border border-r-0 border-[#aca899]" />
        <button type="button" aria-label="Close palette" className="flex h-[10px] w-[11px] items-center justify-center border border-[#888] bg-white">
          <svg width="7" height="7" viewBox="0 0 7 7" stroke="#000" strokeWidth="1.5" aria-hidden="true"><path d="M0 0l7 7M7 0L0 7" /></svg>
        </button>
      </div>
      <div className="flex min-h-0 flex-1">
        <div className="w-3 overflow-hidden">
          <svg width="12" height="500" viewBox="0 0 12 500" stroke="#222" fill="none" aria-hidden="true">
            <path d="M4 6l2 3 2-3M2 11h7M6 9v6M3 14h6M4 18h5M6 16v11M2 22h8" strokeDasharray="3 1" />
            <path d="M4 466l4 3-4 3M2 476h7M6 473v7M3 484h7M6 481v8" strokeDasharray="3 1" />
          </svg>
        </div>
        <div className="flex w-3 flex-col bg-white">
          <button type="button" aria-label="Palette up" className="flex h-[10px] items-center justify-center bg-[#dedbd0]">
            <svg width="8" height="5" viewBox="0 0 8 5" aria-hidden="true"><path d="M0 5L4 0l4 5z" /></svg>
          </button>
          <div className="h-[408px] bg-[#c3c0ae]" />
          <div className="flex-1" />
          <button type="button" aria-label="Palette down" className="mb-[9px] flex h-[10px] items-center justify-center bg-[#c3c0ae]">
            <svg width="8" height="5" viewBox="0 0 8 5" aria-hidden="true"><path d="M0 0h8L4 5z" /></svg>
          </button>
        </div>
      </div>
    </div>
  </aside>
);

const CommandWindow = () => {
  const latin = "font-['Liberation_Mono',monospace] text-[14px]";
  return (
    <section className="shrink-0 border-t border-[#f8f6ec]">
      <div className="h-[1px] bg-black" />
      <div className="flex pt-[5px] pr-2">
        <div className="flex w-[17px] shrink-0 justify-center gap-[2px] py-[2px]">
          <span className="w-[3px] border-r border-[#b5b19d] bg-white" />
          <span className="w-[3px] border-r border-[#b5b19d] bg-white" />
        </div>
        <div className="min-w-0 flex-1 border-t border-l-2 border-[#222] bg-white text-[15px]">
          <div className="flex">
            <div className="min-w-0 flex-1 pt-[1px] whitespace-nowrap">
              <p className="flex h-[14px] items-center leading-[14px]">
                <span><Mixed text="[全部(A)/中心(C)/动态(D)/范围(E)/上一个(P)/比例(S)/窗口(W)/对象(O)] <实时>: _e" latin={latin} /></span>
              </p>
              <p className="flex h-[14px] items-center leading-[14px]">正在重生成模型。</p>
            </div>
            <div className="flex flex-col">
              <ScrollButton dir="up" />
              <ScrollButton dir="down" />
            </div>
          </div>
          <div className="flex h-4 items-center border-t border-[#9d9b92]">
            <label htmlFor="command" className="text-[14px] leading-4">命令:</label>
            <input id="command" type="text" className="h-[15px] min-w-0 flex-1 bg-transparent px-1 text-[14px] outline-none" />
            <ScrollButton dir="left" />
            <ThumbH />
            <span className="w-[18px]" />
            <ScrollButton dir="right" />
            <span className="w-4" />
          </div>
        </div>
      </div>
      <div className="h-[3px] border-y border-[#9d9b92] bg-[#ece9d8]" />
    </section>
  );
};

const Toggle = ({ text, on }: { text: string; on: boolean }) => (
  <button
    type="button"
    aria-pressed={on}
    className={`h-[18px] border px-[1px] text-[12px] leading-4 whitespace-nowrap ${
      on ? 'border-[#333] border-r-white border-b-white bg-[#f2f0e4]' : 'border-[#f7f5ec] border-r-[#aca899] border-b-[#aca899]'
    }`}
  >
    <Mixed text={text} />
  </button>
);

const StatusBar = () => (
  <div className="relative flex h-[21px] shrink-0 items-center gap-1 pl-1">
    <output className="h-[17px] w-[347px] border border-[#aca899] border-r-0 border-b-white pl-[1px] font-['DejaVu_Sans_Mono'] text-[10px] leading-4">
      2340.95, 1340.29, 0.00
    </output>
    {MODES.map(([t, on]) => <Toggle key={t} text={t} on={on} />)}
    <span className="w-4" />
    {LOCKS.map(([t, on]) => <Toggle key={t} text={t} on={on} />)}
    <div className="ml-auto flex items-center gap-[6px] pr-1">
      <div className="flex h-[17px] w-[62px] items-center justify-between border border-[#aca899] border-r-white border-b-white px-1">
        <Icon name="Satellite" size={15} />
        <Icon name="Network" size={15} />
        <Icon name="Unlock" size={15} />
      </div>
      <DropArrow />
    </div>

    {/* floating input method bar */}
    <div className="absolute -top-[5px] left-[227px] z-10 flex h-[25px] w-[126px] items-stretch gap-[1px] border border-[#444] bg-[#cfccc4] p-[2px] text-black">
      <button type="button" aria-label="Input language" className="flex w-5 items-center justify-center border border-white border-r-[#666] border-b-[#666]">
        <Icon name="Language" size={16} />
      </button>
      <button type="button" className="w-10 border border-white border-r-[#666] border-b-[#666] text-[16px] leading-[17px]">标准</button>
      <button type="button" aria-label="Half width" className="flex w-[19px] items-center justify-center border border-white border-r-[#666] border-b-[#666]">
        <svg width="12" height="12" viewBox="0 0 12 12" aria-hidden="true"><path d="M8 0c6 6 0 14-7 9 6 0 8-4 7-9z" /></svg>
      </button>
      <button type="button" aria-label="Punctuation" className="flex w-[19px] items-center justify-center border border-white border-r-[#666] border-b-[#666]">
        <svg width="12" height="10" viewBox="0 0 12 10" aria-hidden="true"><path d="M1 3h3v3H1zM7 2h3v4L8 8V5H7z" /></svg>
      </button>
      <button type="button" aria-label="Soft keyboard" className="flex flex-1 items-center justify-center border border-white border-r-[#666] border-b-[#666]">
        <svg width="16" height="11" viewBox="0 0 16 11" stroke="#777" fill="none" aria-hidden="true">
          <path d="M.5 .5h15v10H.5zM2 3h12M2 5.500h12" strokeDasharray="2 1" /><path d="M4 8.500h8" />
        </svg>
      </button>
    </div>

    {/* load gauge of the task tray */}
    <div className="absolute right-8 -top-[18px] z-10 flex h-[35px] w-9 flex-col justify-between border border-[#2a567e] bg-[#2f6ba3]/85 text-center font-['Liberation_Sans',sans-serif] text-[12px] leading-4 font-bold text-white">
      63.7%
      <span className="h-1 rounded-t-full bg-[#7fc8f5]" />
    </div>
  </div>
);

const Taskbar = () => (
  <footer className="flex h-[30px] shrink-0 items-center bg-linear-to-b from-[#4a8af5] via-[#245edb] via-15% to-[#1c4fc4] text-[12px] text-white">
    <button
      type="button"
      className="flex h-full w-[97px] shrink-0 items-center gap-[5px] rounded-r-lg bg-linear-to-b from-[#6cb565] via-[#3c963a] via-25% to-[#2f7d2c] pl-[11px] text-[19px] leading-6 italic"
    >
      <svg width="20" height="18" viewBox="0 0 20 18" aria-hidden="true">
        <path d="M2 3c3-2 5-1 7 0l-1 6c-2-1-4-1-7 0z" fill="#e8552b" />
        <path d="M10 3c3 2 5 1 8 0l-1 6c-3 1-5 1-8 0z" fill="#7cc142" />
        <path d="M1 10c3-1 5-1 7 0l-1 6c-2-1-4-1-7 0z" fill="#4a8fe8" />
        <path d="M9 10c3 1 5 1 8 0l-1 6c-3 1-5 1-8 0z" fill="#f6c52b" />
      </svg>
      开始
    </button>
    <div className="ml-[7px] flex w-[95px] shrink-0 items-center text-[#cfe0ff]">
      {['Internet browser', 'Desktop', 'Calculator'].map((n) => (
        <button key={n} type="button" aria-label={n} className="flex w-6 justify-center"><Icon name={n} size={17} /></button>
      ))}
      <button type="button" aria-label="More" className="-mt-3 w-6 text-[14px] leading-3">»</button>
    </div>
    <div className="flex min-w-0 flex-1 gap-[2px]">
      {TASKS.map((t) => (
        <button
          key={t.text}
          type="button"
          className={`flex h-6 w-[158px] items-center gap-[3px] rounded-[3px] border pl-2 leading-5 whitespace-nowrap ${
            t.active ? 'border-[#123a94] bg-[#1c4cb0]' : 'border-[#5590fa] bg-[#3b7cf3]'
          }`}
        >
          <Icon name={t.icon} size={17} />
          <span><Mixed text={t.text} latin="font-['Liberation_Mono',monospace] text-[10px]" /></span>
        </button>
      ))}
    </div>
    <div className="mr-4 shrink-0"><Icon name="Language" /></div>
    <div className="flex h-full shrink-0 items-center border-l border-[#0b4fb0] bg-linear-to-b from-[#3bb5f7] via-[#129aee] via-20% to-[#0f8ae0] pr-[14px]">
      <button type="button" aria-label="Show hidden icons" className="-ml-2 flex size-[17px] items-center justify-center rounded-full border border-[#8fd0ff] bg-[#2f86e6]">
        <svg width="8" height="10" viewBox="0 0 8 10" fill="none" stroke="#fff" strokeWidth="2" aria-hidden="true"><path d="M6 1L2 5l4 4" /></svg>
      </button>
      <div className="flex gap-[2px]">
        {['Network', 'Monitor', 'Input', 'M badge', 'Sound', 'Shield'].map((n) => <Icon key={n} name={n} size={16} />)}
      </div>
      <time className="ml-2 font-['DejaVu_Sans_Mono'] text-[10px]">12:31</time>
    </div>
  </footer>
);

export default function App() {
  return (
    <div className="relative flex h-screen flex-col overflow-hidden bg-[#ece9d8] font-['Noto_Sans_CJK_SC',sans-serif] text-black">
      <TitleBar />
      <MenuBar />
      <Toolbars />
      <main className="flex min-h-0 flex-1">
        <div className="w-[26px] shrink-0 border-r border-white">
          {LEFT_A.map((g, i) => <VGroup key={i} items={g} first={i === 0} />)}
        </div>
        <div className="w-[26px] shrink-0">
          {LEFT_B.map((g, i) => <VGroup key={i} items={g} first={i === 0} />)}
        </div>
        <section className="flex min-w-0 flex-1 flex-col border-l-2 border-[#84817a] pb-1">
          <div className="flex min-h-0 flex-1">
            <div className="min-w-0 flex-1 overflow-hidden"><Model /></div>
            <div className="flex w-[17px] flex-col items-center bg-[#fbfaf7]">
              <ScrollButton dir="up" />
              <div className="flex flex-1 items-center">
                <span className="flex h-[18px] w-[15px] flex-col items-center justify-center gap-[1px] rounded-[2px] border border-[#a9bff0] bg-[#c6d5fb]">
                  {[0, 1, 2, 3].map((i) => <span key={i} className="h-[1px] w-[7px] bg-[#8ba7e6]" />)}
                </span>
              </div>
              <ScrollButton dir="down" />
            </div>
          </div>
          <div className="pr-[17px]"><LayoutTabs /></div>
        </section>
        <div className="ml-[2px] w-[26px] shrink-0"><VGroup items={SNAPS} first /></div>
        <div className="w-[25px] shrink-0"><VGroup items={ZOOMS} first /></div>
        <PalettePanel />
      </main>
      <CommandWindow />
      <StatusBar />
      <Taskbar />

      {/* forum watermark over the lower left corner */}
      <div className="pointer-events-none absolute bottom-[4px] left-2 z-20 text-[#7fb2f8]/65">
        <p className="text-[30px] leading-[26px] font-medium">三维网</p>
        <p className="font-['Liberation_Sans',sans-serif] text-[17px] leading-5">3dPortal.cn</p>
      </div>
    </div>
  );
}
